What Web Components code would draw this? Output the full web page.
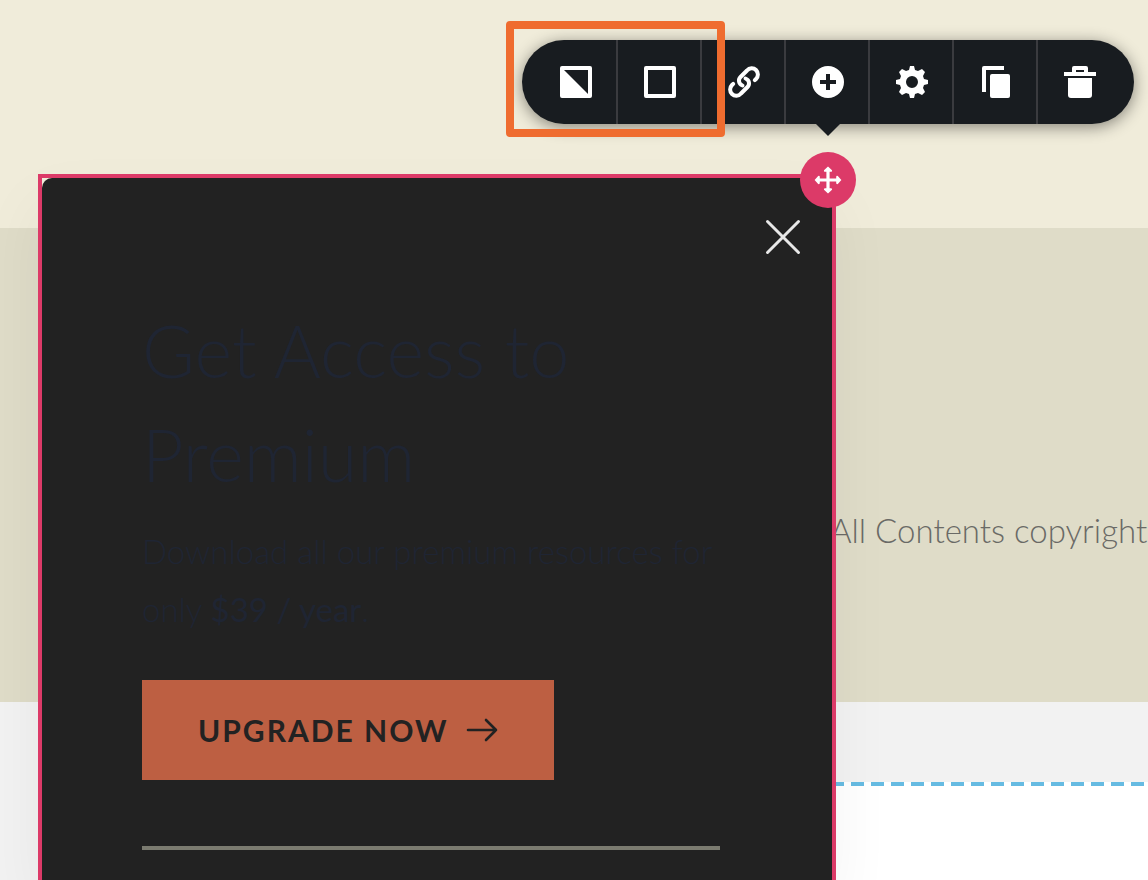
<!DOCTYPE html>
<html lang="en">
<head>
<meta charset="utf-8">
<meta name="viewport" content="width=device-width, initial-scale=1">
<title>Popup editor</title>
<style>
    :root{
        --font: "Lato", "Liberation Sans", sans-serif;
        --accent: #dc3a68;
        --surface: #222222;
        --ink: #1f2533;
        --toolbar: #181c20;
        --highlight: #ef6c2f;
        --button: #bd5f42;
    }
    body{
        margin: 0;
        font-family: var(--font);
    }
</style>
</head>
<body>
<page-editor>
    <page-footer slot="page">All Contents copyright</page-footer>
    <popup-frame slot="popup">
        <edit-toolbar slot="tools"></edit-toolbar>
        <premium-offer>
            <span slot="title">Get Access to Premium</span>
            <span slot="text">Download all our premium resources for only <strong>$39 / year</strong>.</span>
            <span slot="action">UPGRADE NOW</span>
        </premium-offer>
    </popup-frame>
</page-editor>

<script>
class PageEditor extends HTMLElement{
    constructor(){
        super();
        const shadow = this.attachShadow({ mode: 'open' });

        shadow.innerHTML = `
        <style>
        :host{
            display: flex;
            flex-direction: column;
            position: relative;
            min-height: 100vh;
            overflow: hidden;
            background: #f2f2f2;
        }
        .hero{
            height: 228px;
            background: #f0ecda;
        }
        .canvas{
            flex: 1;
            margin: 80px 0 0 131px;
            padding-top: 4px;
            background: repeating-linear-gradient(90deg, #66bbe2 0 13px, #ffffff 13px 20px) top / 100% 4px no-repeat #ffffff;
        }
        .layer{
            position: absolute;
            inset: 174px 312px 0 38px;
        }
        </style>
        <div class="hero"></div>
        <slot name="page"></slot>
        <div class="canvas"></div>
        <div class="layer"><slot name="popup"></slot></div>
        `
    }
}

class PageFooter extends HTMLElement{
    constructor(){
        super();
        const shadow = this.attachShadow({ mode: 'open' });

        shadow.innerHTML = `
        <style>
        :host{
            display: block;
            box-sizing: border-box;
            min-height: 474px;
            padding: 278px 0 0 calc(100% - 318px);
            overflow: hidden;
            background: #dfdcc8;
        }
        p{
            margin: 0;
            font-size: 33px;
            font-weight: 300;
            line-height: 48px;
            white-space: nowrap;
            color: #6a6a66;
        }
        </style>
        <p><slot></slot></p>
        `
    }
}

class PopupFrame extends HTMLElement{
    constructor(){
        super();
        const shadow = this.attachShadow({ mode: 'open' });

        shadow.innerHTML = `
        <style>
        :host{
            display: block;
            box-sizing: border-box;
            position: relative;
            height: 100%;
            border: 4px solid var(--accent);
            border-bottom: none;
            box-shadow: -2px 30px 60px rgba(0, 0, 0, 0.05);
        }
        .surface{
            box-sizing: border-box;
            height: 100%;
            padding: 120px 112px 0 100px;
            border-radius: 10px 0 0 0;
            background: var(--surface);
        }
        button{
            padding: 0;
            border: none;
            background: none;
            cursor: pointer;
        }
        svg{
            display: block;
        }
        .close{
            position: absolute;
            top: 40px;
            right: 30px;
        }
        /* the handle and its toolbar share one centre line */
        .corner{
            position: absolute;
            top: -138px;
            right: -302px;
            display: flex;
            flex-direction: column;
            align-items: center;
            gap: 28px;
        }
        .move{
            display: grid;
            place-items: center;
            width: 56px;
            height: 56px;
            border-radius: 50%;
            background: var(--accent);
        }
        </style>
        <div class="surface"><slot></slot></div>
        <button class="close" aria-label="Close">
            <svg width="38" height="38" viewBox="0 0 38 38" stroke="#e8e8e8" stroke-width="3" stroke-linecap="round">
                <path d="M3.5 3.5 34.5 34.5M34.5 3.5 3.5 34.5"/>
            </svg>
        </button>
        <div class="corner">
            <slot name="tools"></slot>
            <button class="move" aria-label="Move">
                <svg width="28" height="28" viewBox="0 0 28 28" fill="#fff">
                    <path d="M12.4 4v8.4H4v3.2h8.4V24h3.2v-8.4H24v-3.2h-8.4V4z"/>
                    <path d="M14 .6l4 3.6q.6 1.6-1 1.6h-6q-1.6 0-1-1.6zM14 27.4l4-3.6q.6-1.6-1-1.6h-6q-1.6 0-1 1.6zM.6 14l3.6-4q1.6-.6 1.6 1v6q0 1.6-1.6 1zM27.4 14l-3.6-4q-1.6-.6-1.6 1v6q0 1.6 1.6 1z"/>
                </svg>
            </button>
        </div>
        `
    }
}

class EditToolbar extends HTMLElement{
    constructor(){
        super();
        const shadow = this.attachShadow({ mode: 'open' });

        shadow.innerHTML = `
        <style>
        :host{
            display: block;
            position: relative;
        }
        .bar{
            display: flex;
            padding: 0 12px;
            border-radius: 42px;
            background: var(--toolbar);
            box-shadow: 0 3px 16px rgba(0, 0, 0, 0.45);
        }
        button{
            display: grid;
            place-items: center;
            box-sizing: border-box;
            width: 84px;
            height: 84px;
            padding: 0;
            border: solid transparent;
            border-width: 0 2px;
            background: none;
            color: #fff;
            cursor: pointer;
        }
        button:not(:last-child){
            border-right-color: #3a3b3f;
        }
        svg{
            display: block;
            width: 32px;
            height: 32px;
            fill: currentColor;
        }
        .pointer{
            position: absolute;
            top: 100%;
            left: calc(50% - 12px);
            border: 12px solid transparent;
            border-top-color: var(--toolbar);
            border-bottom: none;
        }
        </style>
        <div class="bar" role="toolbar" aria-label="Element tools">
            <button aria-label="Contrast">
                <svg viewBox="0 0 32 32"><path fill-rule="evenodd" d="M2 0h28q2 0 2 2v28q0 2-2 2H2q-2 0-2-2V2q0-2 2-2zM4 4 28 28V4z"/></svg>
            </button>
            <button aria-label="Outline">
                <svg viewBox="0 0 32 32"><path fill-rule="evenodd" d="M2 0h28q2 0 2 2v28q0 2-2 2H2q-2 0-2-2V2q0-2 2-2zM4 4v24h24V4z"/></svg>
            </button>
            <button aria-label="Link">
                <svg viewBox="0 0 32 32" style="fill:none" stroke="currentColor" stroke-width="4" stroke-linecap="round" stroke-linejoin="round">
                    <path d="M14.5 19.5C10.5 18 10 13.5 12.5 11L19 4.500C21.5 1.5 25.5 1.5 28 4s2.5 6.5 0 9L26.8 14.2"/>
                    <path d="M17.5 12.5C21.5 14 22 18.5 19.5 21L13 27.5C10.5 30.5 6.5 30.5 4 28s-2.5-6.5 0-9L5.2 17.8"/>
                </svg>
            </button>
            <button aria-label="Add">
                <svg viewBox="0 0 32 32"><path fill-rule="evenodd" d="M16 0a16 16 0 1 1 0 32a16 16 0 0 1 0-32zM14 8v6H8v4h6v6h4v-6h6v-4h-6V8z"/></svg>
            </button>
            <button aria-label="Settings">
                <svg viewBox="0 0 32 32"><path fill-rule="evenodd" d="M14 0h4l1 4 3 1 4-2 3 3-2 4 1 3 4 1v4l-4 1-1 3 2 4-3 3-4-2-3 1-1 4h-4l-1-4-3-1-4 2-3-3 2-4-1-3-4-1v-4l4-1 1-3-2-4 3-3 4 2 3-1zM16 10a6 6 0 1 0 0 12a6 6 0 0 0 0-12z"/></svg>
            </button>
            <button aria-label="Duplicate">
                <svg viewBox="0 0 32 32"><path d="M4 0h20v4H6v22H2V2q0-2 2-2z"/><rect x="10" y="8" width="20" height="24" rx="2"/></svg>
            </button>
            <button aria-label="Delete">
                <svg viewBox="0 0 32 32"><path fill-rule="evenodd" d="M0 6h8V2q0-2 2-2h12q2 0 2 2v4h8v4H0zM12 4v2h8V4z"/><path d="M4 12h24v17q0 3-3 3H7q-3 0-3-3z"/></svg>
            </button>
        </div>
        <span class="pointer"></span>
        <tool-highlight></tool-highlight>
        `
    }
}

// marks the first two tools
class ToolHighlight extends HTMLElement{
    constructor(){
        super();
        const shadow = this.attachShadow({ mode: 'open' });

        shadow.innerHTML = `
        <style>
        :host{
            position: absolute;
            top: -19px;
            left: -16px;
            box-sizing: border-box;
            width: 219px;
            height: 116px;
            border: 8px solid var(--highlight);
            border-radius: 4px;
            pointer-events: none;
        }
        </style>
        `
    }
}

class PremiumOffer extends HTMLElement{
    constructor(){
        super();
        const shadow = this.attachShadow({ mode: 'open' });

        shadow.innerHTML = `
        <style>
        :host{
            display: flex;
            flex-direction: column;
            align-items: flex-start;
            color: var(--ink);
        }
        h2{
            margin: 0 0 16px;
            font-size: 72px;
            font-weight: 300;
            line-height: 104px;
        }
        p{
            margin: 0 0 42px;
            font-size: 33px;
            font-weight: 300;
            line-height: 58px;
        }
        button{
            display: flex;
            align-items: center;
            gap: 17px;
            height: 100px;
            padding: 0 56px;
            border: none;
            background: var(--button);
            color: var(--surface);
            font-family: var(--font);
            font-size: 30px;
            font-weight: 700;
            letter-spacing: 2px;
            cursor: pointer;
        }
        hr{
            align-self: stretch;
            height: 4px;
            margin: 66px 0 0;
            border: none;
            background: #7b7b70;
        }
        </style>
        <h2><slot name="title"></slot></h2>
        <p><slot name="text"></slot></p>
        <button>
            <slot name="action"></slot>
            <svg width="32" height="26" viewBox="0 0 32 26" fill="none" stroke="currentColor" stroke-width="2.6" stroke-linecap="round" stroke-linejoin="round">
                <path d="M2 13H30M20 3 30 13 20 23"/>
            </svg>
        </button>
        <hr>
        `
    }
}

customElements.define("page-editor", PageEditor);
customElements.define("page-footer", PageFooter);
customElements.define("popup-frame", PopupFrame);
customElements.define("tool-highlight", ToolHighlight);
customElements.define("edit-toolbar", EditToolbar);
customElements.define("premium-offer", PremiumOffer);
</script>
</body>
</html>
